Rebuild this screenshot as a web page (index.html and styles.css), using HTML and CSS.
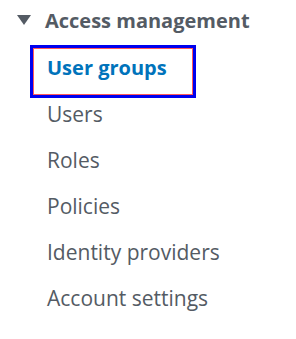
FILE: index.html
```html
<!DOCTYPE html>
<html lang="en">
<head>
  <meta charset="UTF-8">
  <title>Access management</title>
  <link rel="stylesheet" href="styles.css">
</head>
<body>
<div class="side-nav">
  <div class="section-title">
    <span class="caret"></span>
    <span>Access management</span>
  </div>
  <ul class="nav-list">
    <li class="active"><a href="#">User groups</a></li>
    <li><a href="#">Users</a></li>
    <li><a href="#">Roles</a></li>
    <li><a href="#">Policies</a></li>
    <li><a href="#">Identity providers</a></li>
    <li><a href="#">Account settings</a></li>
  </ul>
</div>
</body>
</html>
```

FILE: styles.css
```css
* {
  margin: 0;
  padding: 0;
}

body {
  background-color: #fff;
  font-family: "Open Sans", "Noto Sans", sans-serif;
  color: #545b64;
}

ul {
  list-style: none;
}

.side-nav {
  width: 296px;
}

.section-title {
  display: flex;
  align-items: center;
  height: 40px;
  padding-left: 17px;
  font-size: 20px;
  font-weight: 700;
}

.caret {
  width: 0;
  height: 0;
  margin-right: 14px;
  border-left: 7px solid transparent;
  border-right: 7px solid transparent;
  border-top: 10px solid #545b64;
}

.nav-list {
  margin-top: 5px;
  padding-left: 33px;
}

.nav-list li {
  height: 46px;
  line-height: 46px;
}

.nav-list a {
  position: relative;
  display: inline-block;
  padding: 0 26px 0 14px;
  font-size: 21px;
  color: #545b64;
  text-decoration: none;
}

.nav-list li.active a {
  font-size: 20px;
  font-weight: 700;
  color: #0073bb;
}

/* focus ring drawn over the active link */
.nav-list li.active a::after {
  content: "";
  position: absolute;
  top: 0;
  bottom: -7px;
  left: -3px;
  right: -3px;
  border: 3px solid #0000ee;
  box-shadow: inset 0 0 0 1px #ff5a5a;
}
```
